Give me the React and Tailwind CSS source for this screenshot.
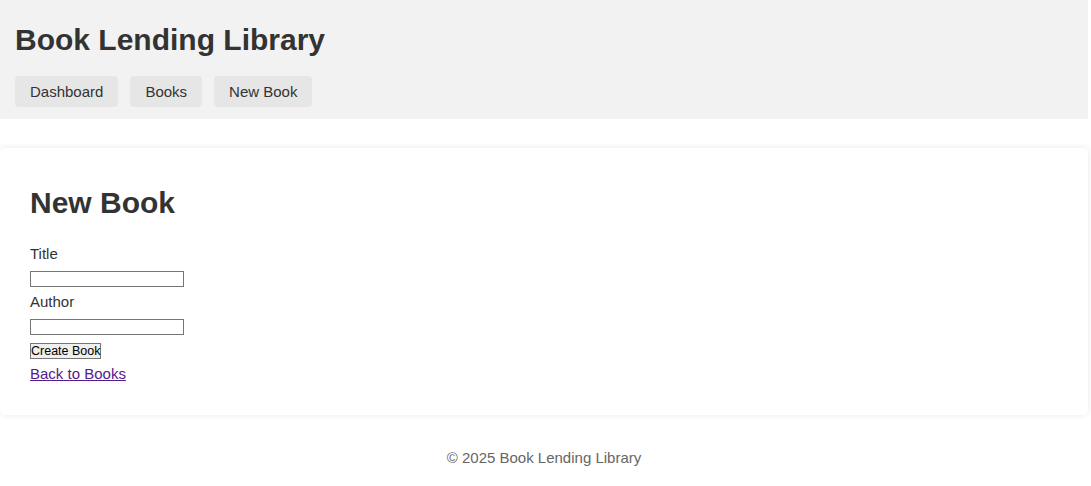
import { useState } from "react";

const NavLink = ({ children }) => (
  <a
    href="#"
    className="rounded-[4px] bg-[#e6e6e6] px-[15px] py-[7px] text-[15px] leading-[17px] text-[#333] no-underline"
  >
    {children}
  </a>
);

const NewBook = () => {
  const [title, setTitle] = useState("");
  const [author, setAuthor] = useState("");

  const handleSubmit = (e) => {
    e.preventDefault();
  };

  return (
    <div className="w-[1088px] font-['Liberation_Sans',Arial,sans-serif] text-[15px] text-[#333]">
      <header className="bg-[#f2f2f2] px-[15px] pt-[23px] pb-[12px]">
        <h1 className="text-[30px] font-bold leading-[34px]">
          Book Lending Library
        </h1>
        <nav className="mt-[19px] flex gap-[12px]">
          <NavLink>Dashboard</NavLink>
          <NavLink>Books</NavLink>
          <NavLink>New Book</NavLink>
        </nav>
      </header>

      <main className="mt-[29px] rounded-[5px] bg-white px-[30px] pt-[38px] pb-[33px] shadow-[0_0_6px_rgba(0,0,0,0.09)]">
        <h2 className="mb-[25px] text-[30px] font-bold leading-[34px]">
          New Book
        </h2>
        <form onSubmit={handleSubmit} className="flex flex-col items-start">
          <label className="mb-[9px] block leading-[17px]">Title</label>
          <input
            className="mb-[6px] h-[16px] w-[154px] border border-[#767676] p-0 text-[13px]"
            type="text"
            value={title}
            onChange={(e) => setTitle(e.target.value)}
          />
          <label className="mb-[9px] block leading-[17px]">Author</label>
          <input
            className="mb-[8px] h-[16px] w-[154px] border border-[#767676] p-0 text-[13px]"
            type="text"
            value={author}
            onChange={(e) => setAuthor(e.target.value)}
          />
          <button
            type="submit"
            className="h-[16px] border border-[#767676] bg-[#efefef] px-0 text-[12.5px] leading-[13px] text-black"
          >
            Create Book
          </button>
          <a
            href="#"
            className="mt-[6px] leading-[17px] text-[#551a8b] underline"
          >
            Back to Books
          </a>
        </form>
      </main>

      <footer className="pt-[34px] text-center leading-[17px] text-[#666]">
        © 2025 Book Lending Library
      </footer>
    </div>
  );
};

export default NewBook;
